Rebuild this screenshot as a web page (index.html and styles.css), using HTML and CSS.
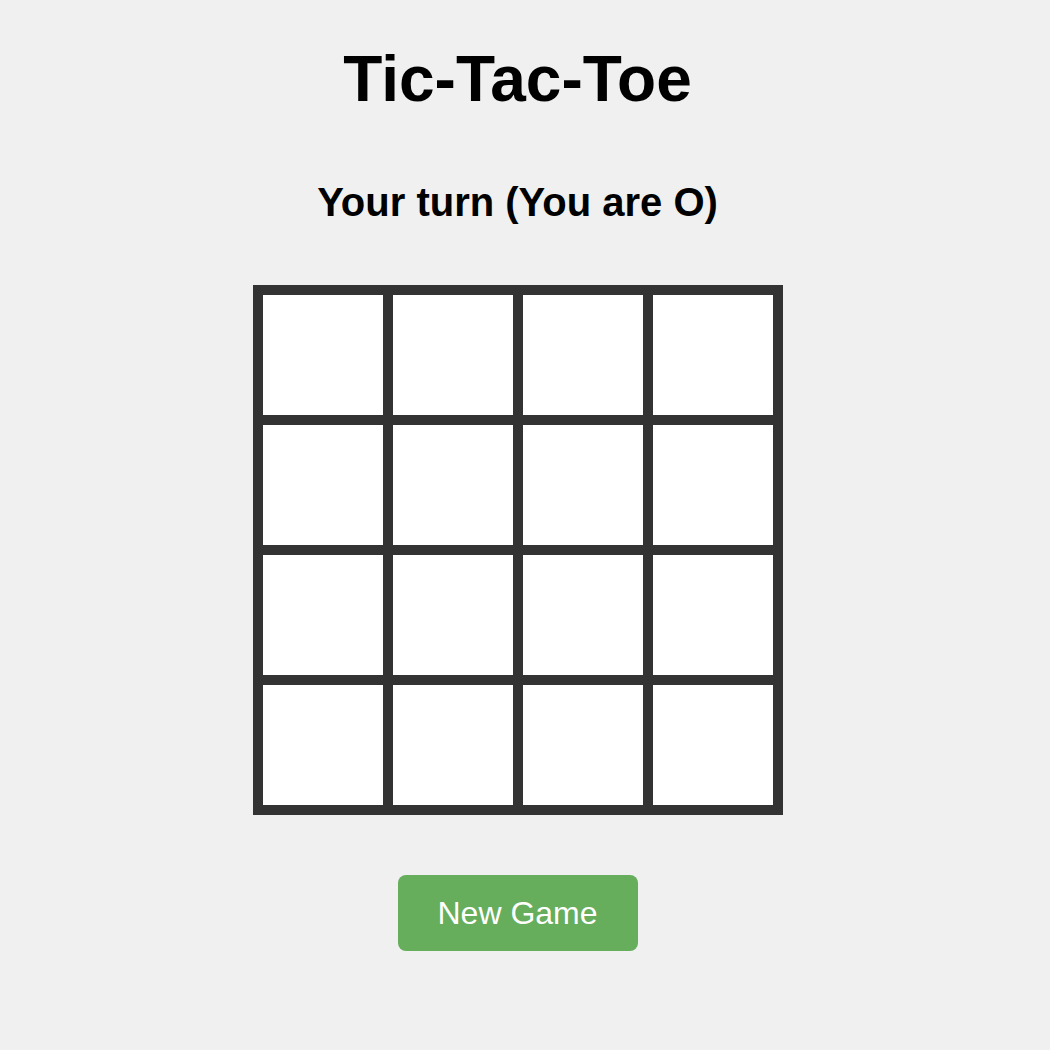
FILE: index.html
```html
<!DOCTYPE html>
<html>
<head>
<meta charset="utf-8">
<link rel="stylesheet" href="styles.css">
</head>
<body>
<main class="game">
  <h1 class="title">Tic-Tac-Toe</h1>
  <h2 class="status">Your turn (You are O)</h2>
  <div class="board">
    <div class="cell"></div><div class="cell"></div><div class="cell"></div><div class="cell"></div>
    <div class="cell"></div><div class="cell"></div><div class="cell"></div><div class="cell"></div>
    <div class="cell"></div><div class="cell"></div><div class="cell"></div><div class="cell"></div>
    <div class="cell"></div><div class="cell"></div><div class="cell"></div><div class="cell"></div>
  </div>
  <button class="new-game">New Game</button>
</main>
</body>
</html>
```
FILE: styles.css
```css
html, body {
  margin: 0;
  padding: 0;
  background: #f0f0f0;
}
body {
  font-family: "Liberation Sans", Arial, Helvetica, sans-serif;
  color: #000;
}
.game {
  width: 1035px;
  display: flex;
  flex-direction: column;
  align-items: center;
  padding-top: 44px;
}
.title {
  margin: 0;
  font-size: 64px;
  line-height: 70px;
  font-weight: bold;
}
.status {
  margin: 64px 0 0;
  font-size: 40px;
  line-height: 48px;
  font-weight: bold;
}
.board {
  margin-top: 59px;
  display: grid;
  grid-template-columns: repeat(4, 120px);
  grid-template-rows: repeat(4, 120px);
  gap: 10px;
  padding: 10px;
  background: #333333;
}
.cell {
  background: #ffffff;
}
.new-game {
  margin-top: 60px;
  width: 240px;
  height: 76px;
  padding: 0;
  border: none;
  border-radius: 8px;
  background: #66ad5c;
  color: #ffffff;
  font-family: "Liberation Sans", Arial, Helvetica, sans-serif;
  font-size: 32px;
}
```
